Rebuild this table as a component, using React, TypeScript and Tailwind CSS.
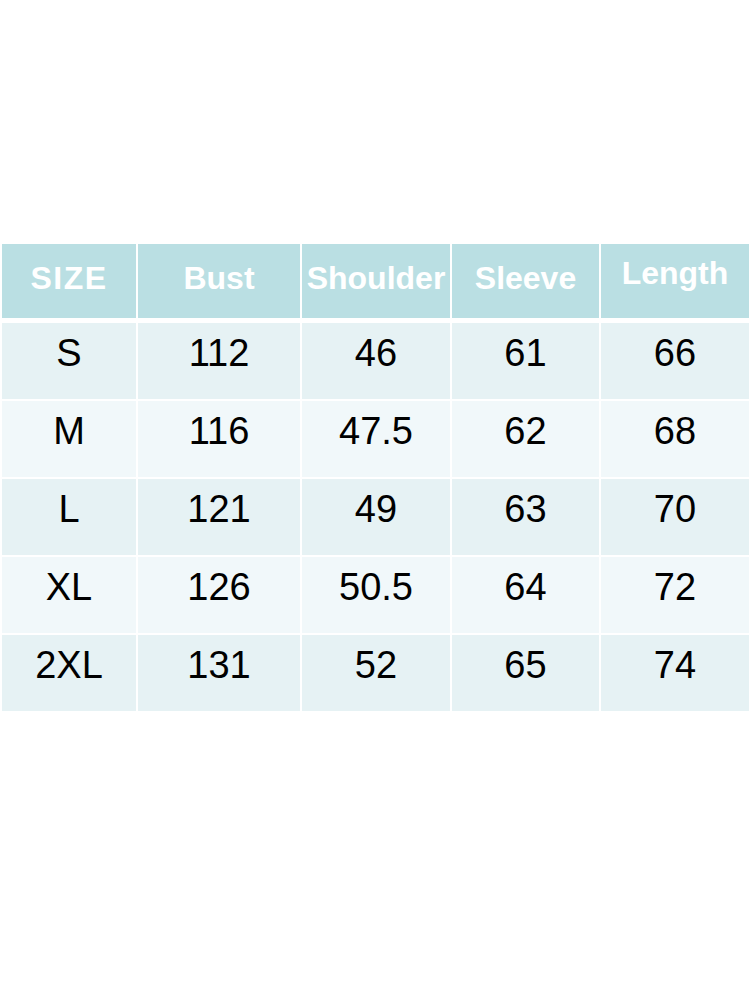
import React from 'react';

const headers = ['SIZE', 'Bust', 'Shoulder', 'Sleeve', 'Length'];

const rows = [
  ['S', '112', '46', '61', '66'],
  ['M', '116', '47.5', '62', '68'],
  ['L', '121', '49', '63', '70'],
  ['XL', '126', '50.5', '64', '72'],
  ['2XL', '131', '52', '65', '74'],
];

const cols = 'grid grid-cols-[134px_162px_148px_147px_148px] gap-x-[2px]';

export default function App() {
  return (
    <div className="w-[750px] h-[1000px] bg-white pt-[244px] pl-[2px] font-['Liberation_Sans',Arial,sans-serif]">
      {/* Header */}
      <div className={cols}>
        {headers.map((h, i) => (
          <div
            key={h}
            className={`h-[74px] bg-[#badfe3] flex items-center justify-center text-white font-bold text-[32px] ${
              i === 0 ? 'tracking-[1.5px]' : ''
            } ${i === 4 ? 'pb-[16px]' : 'pb-[6px]'}`}
          >
            {h}
          </div>
        ))}
      </div>

      {/* Body */}
      <div className="mt-[5px] flex flex-col gap-y-[2px]">
        {rows.map((r, ri) => (
          <div key={r[0]} className={cols}>
            {r.map((v, ci) => (
              <div
                key={ci}
                className={`h-[76px] flex justify-center pt-[2px] text-[38px] text-black ${
                  ri % 2 === 0 ? 'bg-[#e6f2f4]' : 'bg-[#f1f8fa]'
                }`}
              >
                {v}
              </div>
            ))}
          </div>
        ))}
      </div>
    </div>
  );
}
